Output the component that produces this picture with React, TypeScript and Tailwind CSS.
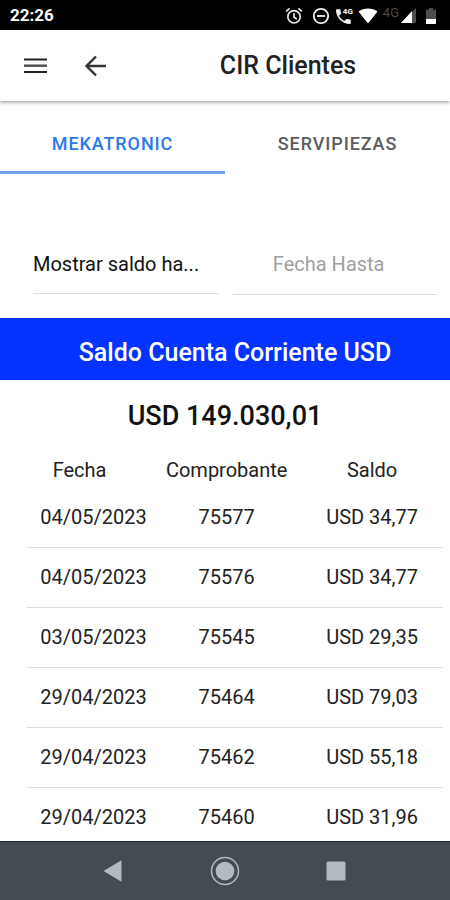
import React, { useState } from 'react'

const TABS = ['MEKATRONIC', 'SERVIPIEZAS']

const MOVEMENTS = [
  { fecha: '04/05/2023', comprobante: '75577', saldo: 'USD 34,77' },
  { fecha: '04/05/2023', comprobante: '75576', saldo: 'USD 34,77' },
  { fecha: '03/05/2023', comprobante: '75545', saldo: 'USD 29,35' },
  { fecha: '29/04/2023', comprobante: '75464', saldo: 'USD 79,03' },
  { fecha: '29/04/2023', comprobante: '75462', saldo: 'USD 55,18' },
  { fecha: '29/04/2023', comprobante: '75460', saldo: 'USD 31,96' },
]

const StatusBar: React.FunctionComponent = () => (
  <div className="flex h-[30px] shrink-0 items-center justify-between bg-black pl-[10px] pr-[14px] pt-px text-white">
    <span className="text-[17px] font-bold">22:26</span>
    <div className="flex items-center gap-[5px]">
      {/* alarm */}
      <svg className="mr-1 h-[18px] w-[18px]" viewBox="0 0 18 18" fill="none" stroke="#e8e8e8" strokeWidth="1.7">
        <circle cx="9" cy="9.8" r="6.2" />
        <path d="M9 6.2v4l2.8 1.7M1.2 4.3l3.4-2.9M16.8 4.3l-3.4-2.9" />
      </svg>
      {/* do not disturb */}
      <svg className="h-[18px] w-[18px]" viewBox="0 0 18 18" fill="none" stroke="#f2f2f2" strokeWidth="1.8">
        <circle cx="9" cy="9" r="7.2" />
        <path d="M5 9h8" />
      </svg>
      {/* call over 4G */}
      <span className="relative h-[18px] w-[18px]">
        <svg className="h-[18px] w-[18px]" viewBox="0 0 18 18" fill="#f2f2f2">
          <path d="M1 3.2c0-.6.4-1 1-1h2.6c.5 0 .9.4.9.9 0 1 .2 2 .5 2.9.1.3 0 .7-.2.9L4 8.7c1.2 2.3 3 4.1 5.300 5.300l1.800-1.800c.3-.3.6-.3.9-.2.9.3 1.900.5 2.900.5.5 0 .9.4.9.9V16c0 .6-.4 1-1 1C7.500 17 1 10.500 1 3.200z" />
        </svg>
        <span className="absolute left-[8px] top-px text-[8px] font-bold leading-[8px]">4G</span>
      </span>
      {/* wifi */}
      <svg className="h-4 w-5" viewBox="0 0 20 16" fill="#fff">
        <path d="M10 15.500L.5 3.400C3 1.400 6.300.4 10 .4s7 1 9.500 3L10 15.500z" />
      </svg>
      <span className="-mr-[3px] pb-[6px] text-[13px] leading-4 text-[#4a4a4a]">4G</span>
      {/* mobile signal */}
      <svg className="mr-[5px] h-[15px] w-[15px]" viewBox="0 0 15 15">
        <path d="M15 0v15H0z" fill="#4d4d4d" />
        <path d="M11 3v12H0z" fill="#fff" />
      </svg>
      {/* battery */}
      <svg className="h-4 w-[10px]" viewBox="0 0 10 16">
        <path d="M3 0h4v1.500h2c.6 0 1 .4 1 1V11H0V2.500c0-.6.4-1 1-1h2z" fill="#4d4d4d" />
        <path d="M0 11h10v4c0 .6-.4 1-1 1H1c-.6 0-1-.4-1-1z" fill="#fff" />
      </svg>
    </div>
  </div>
)

const Header: React.FunctionComponent = () => (
  <header className="z-10 flex h-[71px] shrink-0 items-center bg-white shadow-[0_1px_4px_rgba(0,0,0,0.45)]">
    <button type="button" aria-label="Menú" className="ml-6 h-6 w-6">
      <svg className="h-6 w-6" viewBox="0 0 24 24" strokeWidth="2">
        <path d="M0 5.500h23M0 18h23" stroke="#222" />
        <path d="M0 11.700h23" stroke="#555" strokeWidth="2.500" />
      </svg>
    </button>
    <button type="button" aria-label="Volver" className="ml-9 h-6 w-6">
      <svg className="h-6 w-6" viewBox="0 0 24 24" fill="none" stroke="#333" strokeWidth="2.400">
        <path d="M12 2.500L2.500 12l9.500 9.500M2.500 12H22" />
      </svg>
    </button>
    <h1 className="ml-[18px] flex-1 text-center text-[25px] font-medium text-[#222]">CIR Clientes</h1>
  </header>
)

const NavigationBar: React.FunctionComponent = () => (
  <nav className="flex h-[59px] shrink-0 items-center justify-center gap-20 border-t border-[#252d33] bg-[#444b51]">
    <button type="button" aria-label="Atrás" className="h-8 w-8">
      <svg className="h-8 w-8" viewBox="0 0 32 32" fill="#b4babd">
        <path d="M24.500 6.200v19.600c0 .5-.5.700-.9.500L7.300 16.600c-.5-.3-.5-.9 0-1.200L23.600 5.700c.4-.2.900 0 .9.500z" />
      </svg>
    </button>
    <button type="button" aria-label="Inicio" className="h-8 w-8">
      <svg className="h-8 w-8" viewBox="0 0 32 32">
        <circle cx="16" cy="16" r="13.500" fill="none" stroke="#b4babd" strokeWidth="1.500" />
        <circle cx="16" cy="16" r="9.300" fill="#b4babd" />
      </svg>
    </button>
    <button type="button" aria-label="Recientes" className="h-8 w-8">
      <svg className="h-8 w-8" viewBox="0 0 32 32" fill="#b4babd">
        <rect x="5.500" y="6.500" width="19" height="19" rx="1.500" />
      </svg>
    </button>
  </nav>
)

const App: React.FunctionComponent = () => {
  const [activeTab, setActiveTab] = useState(TABS[0])
  const [fechaHasta, setFechaHasta] = useState('')

  return (
    <div className="flex h-screen flex-col bg-white font-['Roboto',sans-serif] text-[#222]">
      <StatusBar />
      <Header />
      <main className="flex-1 overflow-y-auto [scrollbar-width:none]">
        <div className="flex h-[73px]" role="tablist">
          {TABS.map((tab) => (
            <button
              key={tab}
              type="button"
              role="tab"
              aria-selected={tab === activeTab}
              onClick={() => setActiveTab(tab)}
              className={`flex-1 border-b-3 pt-4 text-lg font-medium leading-6 tracking-wider ${
                tab === activeTab ? 'border-[#74a0ea] text-[#2a78ee]' : 'border-transparent text-[#5c5c5c]'
              }`}
            >
              {tab}
            </button>
          ))}
        </div>

        <div className="flex items-start gap-[14px] pl-[33px] pr-[13px] pt-[60px] pb-[23px]">
          <select
            aria-label="Mostrar saldo"
            className="h-[60px] w-[46%] appearance-none border-b border-[#dcdcdc] bg-transparent text-xl text-[#111]"
          >
            <option>Mostrar saldo ha...</option>
          </select>
          <input
            type="text"
            aria-label="Fecha Hasta"
            placeholder="Fecha Hasta"
            value={fechaHasta}
            onChange={(e) => setFechaHasta(e.target.value)}
            className="h-[61px] min-w-0 flex-1 border-b border-[#dcdcdc] pl-10 text-xl placeholder:text-[#a0a0a0]"
          />
        </div>

        <h2 className="bg-[#0433ff] pt-5 pb-3 pl-5 text-center text-[25px] font-medium leading-[30px] text-white">
          Saldo Cuenta Corriente USD
        </h2>
        <p className="pt-4 pb-[17px] text-center text-[27px] font-medium leading-10 text-[#111]">USD 149.030,01</p>

        <div className="pl-[27px] pr-[7px]">
          <table className="w-full table-fixed text-xl">
            <thead>
              <tr className="h-[34px]">
                <th className="w-[32%] pr-7 font-normal">Fecha</th>
                <th className="w-[32%] font-normal">Comprobante</th>
                <th className="pl-2 font-normal">Saldo</th>
              </tr>
            </thead>
            <tbody>
              {MOVEMENTS.map((m) => (
                <tr key={m.comprobante} className="h-[60px] border-b border-[#dcdcdc] text-center">
                  <td>{m.fecha}</td>
                  <td>{m.comprobante}</td>
                  <td className="pl-2">{m.saldo}</td>
                </tr>
              ))}
            </tbody>
          </table>
        </div>
      </main>
      <NavigationBar />
    </div>
  )
}

export default App
